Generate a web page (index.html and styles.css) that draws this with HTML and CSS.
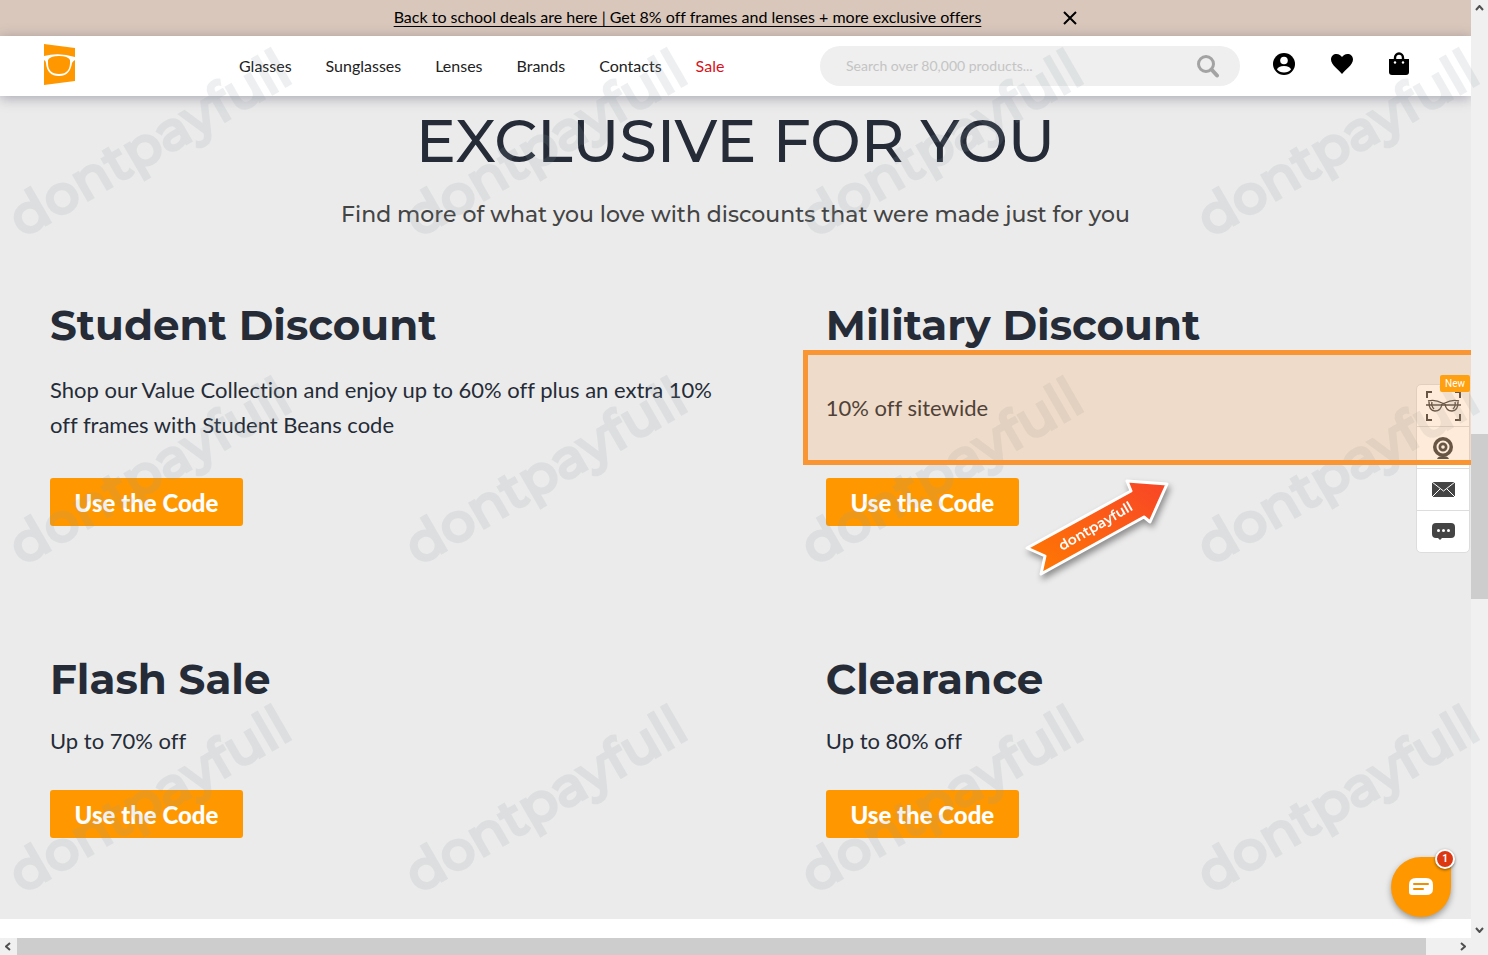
FILE: index.html
```
<!doctype html>
<html lang="en">
  <head>
    <meta charset="utf-8">
    <meta name="viewport" content="width=device-width, initial-scale=1">
    <title>Exclusive For You</title>
    <link rel="stylesheet" href="styles.css">
  </head>
  <body>
    <div class="page">
      <div class="promo">
        <a class="promo-link" href="#">Back to school deals are here | Get 8% off frames and lenses + more exclusive offers</a>
        <button class="promo-close" type="button" aria-label="Close">
          <svg width="14" height="14" viewBox="0 0 14 14"><path d="M1 1l12 12M13 1L1 13" stroke="#000" stroke-width="2"/></svg>
        </button>
      </div>

      <header class="header">
        <a class="logo" href="#" aria-label="Home">
          <svg width="31" height="41" viewBox="0 0 31 41">
            <path d="M0 0l31 4v33L0 41z" fill="#ff9800"/>
            <path d="M0 12Q15 8 31 13V16Q29 17 28 19Q26 32 15 32Q3 32 2 19Q2 17 0 16z" fill="#fff"/>
            <path d="M4 16Q6 12 15 12Q24 12 26 16Q27 30 15 30Q4 30 4 19z" fill="#ff9800"/>
          </svg>
        </a>
        <nav class="nav">
          <a href="#">Glasses</a>
          <a href="#">Sunglasses</a>
          <a href="#">Lenses</a>
          <a href="#">Brands</a>
          <a href="#">Contacts</a>
          <a class="nav-sale" href="#">Sale</a>
        </nav>
        <form class="search">
          <input class="search-input" type="search" aria-label="Search" placeholder="Search over 80,000 products...">
          <button class="search-button" type="submit" aria-label="Search">
            <svg width="24" height="24" viewBox="0 0 24 24" fill="none" stroke="#a3a3a3"><circle cx="10" cy="10" r="7.5" stroke-width="3"/><path d="M15.5 15.5l5.5 6" stroke-width="4" stroke-linecap="round"/></svg>
          </button>
        </form>
        <div class="actions">
          <a href="#" aria-label="Account">
            <svg width="22" height="22" viewBox="0 0 22 22"><circle cx="11" cy="11" r="11"/><circle cx="11" cy="7.5" r="3.8" fill="#fff"/><path d="M4 16.5Q5 13 11 13t7 3.500Q15.500 19.500 11 19.500T4 16.500z" fill="#fff"/></svg>
          </a>
          <a href="#" aria-label="Favourites">
            <svg width="24" height="22" viewBox="0 0 24 22"><path d="M12 21C9 17 1 12 1 6.500C1 3 3.500 1 6.500 1C9 1 11 2.500 12 4C13 2.500 15 1 17.500 1C20.500 1 23 3 23 6.500C23 12 15 17 12 21z"/></svg>
          </a>
          <a href="#" aria-label="Bag">
            <svg width="20" height="24" viewBox="0 0 20 24"><path d="M6 11V6a4 4.500 0 0 1 8 0v5" fill="none" stroke="#000" stroke-width="2.400"/><path d="M0 7h20v13q0 3-3 3H3q-3 0-3-3z"/><circle cx="6" cy="10.500" r="1.200" fill="#fff"/><circle cx="14" cy="10.500" r="1.200" fill="#fff"/></svg>
          </a>
        </div>
      </header>

      <main class="main">
        <h1 class="title">EXCLUSIVE FOR YOU</h1>
        <p class="subtitle">Find more of what you love with discounts that were made just for you</p>

        <div class="offers">
          <section class="offer">
            <h2>Student Discount</h2>
            <p>Shop our Value Collection and enjoy up to 60% off plus an extra 10% off frames with Student Beans code</p>
            <button class="button" type="button">Use the Code</button>
          </section>
          <section class="offer">
            <h2>Military Discount</h2>
            <p>10% off sitewide</p>
            <button class="button" type="button">Use the Code</button>
            <div class="highlight"></div>
            <svg class="arrow" width="160" height="116" viewBox="0 0 160 116">
              <defs>
                <linearGradient id="arrow-fill" x1="0" y1="1" x2="1" y2="0">
                  <stop offset="0" stop-color="#ff7b00"/>
                  <stop offset="1" stop-color="#f84428"/>
                </linearGradient>
              </defs>
              <path d="M8 76L112 19L108 9L148 12L131 50L125 45L22 102L26 84z" fill="url(#arrow-fill)" stroke="#fff" stroke-width="3" stroke-linejoin="round"/>
              <text class="arrow-text" transform="translate(43 79) rotate(-30)">dontpayfull</text>
            </svg>
          </section>
          <section class="offer offer-short">
            <h2>Flash Sale</h2>
            <p>Up to 70% off</p>
            <button class="button" type="button">Use the Code</button>
          </section>
          <section class="offer offer-short">
            <h2>Clearance</h2>
            <p>Up to 80% off</p>
            <button class="button" type="button">Use the Code</button>
          </section>
        </div>
      </main>

      <aside class="tools">
        <a href="#" aria-label="Virtual try-on">
          <svg width="35" height="30" viewBox="0 0 35 30" fill="none" stroke="#444">
            <path d="M1 7V1h5M29 1h5v6M34 23v6h-5M6 29H1v-6" stroke-width="2"/>
            <path d="M0 14h35" stroke-width="1.500"/>
            <path d="M2 10Q9 8 16 12Q17.500 13 19 12Q26 8 33 10M3 11q0 9 6 9q6 0 7-7M32 11q0 9-6 9q-6 0-7-7M6 11q-1 4 2 7M29 11q1 4-2 7" stroke-width="1.400"/>
          </svg>
        </a>
        <a href="#" aria-label="Webcam">
          <svg width="22" height="22" viewBox="0 0 22 22"><circle cx="11" cy="10" r="10" fill="#444"/><circle cx="11" cy="10" r="5.500" fill="none" stroke="#fff" stroke-width="2"/><circle cx="11" cy="10" r="1.800" fill="#fff"/><path d="M5 22q1-3 6-3t6 3z" fill="#444"/></svg>
        </a>
        <a href="#" aria-label="Email">
          <svg width="23" height="15" viewBox="0 0 23 15"><path d="M0 0h23v15H0z" fill="#444"/><path d="M0 0l11.500 9L23 0M0 15l8-8M23 15l-8-8" fill="none" stroke="#fff" stroke-width="1"/></svg>
        </a>
        <a href="#" aria-label="Chat">
          <svg width="23" height="17" viewBox="0 0 23 17"><path d="M4 0h15q4 0 4 4v7q0 4-4 4H10l-2 2-2-2H4q-4 0-4-4V4q0-4 4-4z" fill="#444"/><g fill="#fff"><circle cx="6.500" cy="7.500" r="1.500"/><circle cx="11.500" cy="7.500" r="1.500"/><circle cx="16.500" cy="7.500" r="1.500"/></g></svg>
        </a>
        <span class="tools-new">New</span>
      </aside>

      <button class="chat" type="button" aria-label="Open chat">
        <svg width="24" height="18" viewBox="0 0 24 18"><path d="M7 0h10q7 0 7 7v4q0 6-7 6H3q-3 0-3-3V7q0-7 7-7z" fill="#fff"/><path d="M5 6h14M5 11h9" stroke="#f09000" stroke-width="2" stroke-linecap="round"/></svg>
        <span class="chat-count">1</span>
      </button>
    </div>

    <div class="scroll-y">
      <svg width="9" height="6" viewBox="0 0 9 6"><path d="M1 5l3.500-4L8 5"/></svg>
      <div class="scroll-y-thumb"></div>
      <svg width="9" height="6" viewBox="0 0 9 6"><path d="M1 1l3.500 4L8 1"/></svg>
    </div>
    <div class="scroll-x">
      <svg width="6" height="9" viewBox="0 0 6 9"><path d="M5 1L1 4.500L5 8"/></svg>
      <div class="scroll-x-thumb"></div>
      <svg width="6" height="9" viewBox="0 0 6 9"><path d="M1 1l4 3.500L1 8"/></svg>
    </div>

    <div class="watermarks" aria-hidden="true">
      <span>dontpayfull</span>
      <span>dontpayfull</span>
      <span>dontpayfull</span>
      <span>dontpayfull</span>
      <span>dontpayfull</span>
      <span>dontpayfull</span>
      <span>dontpayfull</span>
      <span>dontpayfull</span>
      <span>dontpayfull</span>
      <span>dontpayfull</span>
      <span>dontpayfull</span>
      <span>dontpayfull</span>
    </div>
  </body>
</html>
```
FILE: styles.css
```
*, *::before, *::after {
  box-sizing: border-box;
}

body {
  position: relative;
  display: grid;
  grid-template-columns: 1fr 17px;
  grid-template-rows: 1fr 17px;
  height: 100vh;
  margin: 0;
  overflow: hidden;
  background: #f0f0f0;
  font-family: Lato, "Open Sans", sans-serif;
  font-variant-ligatures: none;
  color: #252b37;
}

h1, h2, p {
  margin: 0;
}

a {
  color: inherit;
  text-decoration: none;
}

svg {
  display: block;
}

button {
  border: 0;
  padding: 0;
  background: none;
  font-family: inherit;
  cursor: pointer;
}

.page {
  position: relative;
  overflow: hidden;
  background: #fff;
}

/* Top bar */
.promo {
  display: flex;
  justify-content: center;
  align-items: center;
  gap: 82px;
  height: 36px;
  background: #d9c7bb;
  color: #000;
  font-size: 16px;
}

.promo-link {
  padding-bottom: 4px;
  text-decoration: underline;
  text-underline-offset: 3px;
}

.header {
  position: relative;
  display: flex;
  align-items: center;
  height: 60px;
  padding: 0 62px 0 44px;
  background: #fff;
  box-shadow: 0 2px 12px rgba(60, 60, 90, .4);
}

.logo {
  padding-bottom: 3px;
}

.nav {
  display: flex;
  gap: 34px;
  margin-left: 164px;
  padding-bottom: 2px;
  color: #222;
  font-size: 16px;
}

.nav .nav-sale {
  color: #d8121a;
}

.search {
  display: flex;
  align-items: center;
  width: 420px;
  height: 40px;
  margin-left: auto;
  padding: 0 20px 0 26px;
  border-radius: 20px;
  background: #efefef;
}

.search-input {
  flex: 1;
  min-width: 0;
  padding: 0 0 2px;
  border: 0;
  outline: 0;
  background: none;
  font: 14px Lato, sans-serif;
}

.search-input::placeholder {
  color: #c4c4c4;
}

.actions {
  display: flex;
  align-items: center;
  gap: 35px;
  margin-left: 33px;
  padding-bottom: 4px;
}

/* Offers */
.main {
  padding: 10px 0 81px 50px;
  background: #ebebeb;
}

.title,
.subtitle {
  margin-left: -50px;
  font-family: Montserrat, sans-serif;
  text-align: center;
}

.title {
  font-size: 60px;
  font-weight: 500;
  line-height: 70px;
}

.subtitle {
  margin-top: 21px;
  color: #444;
  font-size: 22px;
  font-weight: 500;
  line-height: 36px;
}

.offers {
  display: grid;
  grid-template-columns: 14fr 13fr;
  gap: 127px 81px;
  margin-top: 66px;
}

.offer {
  position: relative;
  display: flex;
  flex-direction: column;
  align-items: flex-start;
}

.offer h2 {
  font-family: Montserrat, sans-serif;
  font-size: 42px;
  font-weight: 700;
  line-height: 52px;
}

.offer p {
  display: flex;
  flex: 1;
  align-items: center;
  max-width: 680px;
  margin: 21px 0 36px;
  font-size: 22px;
  line-height: 35px;
}

.offer-short p {
  margin: 18px 0 32px;
}

.button {
  width: 193px;
  height: 48px;
  border-radius: 3px;
  background: #ff9800;
  color: #fff;
  font-size: 24px;
  font-weight: 900;
}

.highlight {
  position: absolute;
  z-index: 4;
  top: 51px;
  left: -23px;
  right: 0;
  height: 115px;
  border: 5px solid #f99633;
  border-right: 0;
  background: rgba(250, 155, 65, .2);
}

.arrow {
  position: absolute;
  z-index: 5;
  top: 173px;
  left: 193px;
  filter: drop-shadow(2px 4px 3px rgba(0, 0, 0, .4));
}

.arrow-text {
  fill: #fff;
  font: 600 14px Montserrat, sans-serif;
}

/* Floating widgets */
.tools {
  position: absolute;
  top: 384px;
  right: 1px;
  width: 54px;
  border: 1px solid #ddd;
  border-radius: 5px;
  background: #fff;
}

.tools a {
  display: flex;
  justify-content: center;
  align-items: center;
  height: 42px;
}

.tools a:first-child {
  height: 41px;
}

.tools a + a {
  border-top: 1px solid #ddd;
}

.tools-new {
  position: absolute;
  z-index: 5;
  top: -10px;
  right: -1px;
  padding: 0 5px;
  border-radius: 2px;
  background: #ffa010;
  color: #fff;
  font: 10px/17px Roboto, sans-serif;
}

.chat {
  position: absolute;
  right: 20px;
  bottom: 21px;
  display: flex;
  justify-content: center;
  align-items: center;
  width: 60px;
  height: 60px;
  border-radius: 30px 6px 30px 30px;
  background: #ff9800;
  box-shadow: 0 3px 6px rgba(0, 0, 0, .35);
}

.chat-count {
  position: absolute;
  top: -8px;
  right: -4px;
  width: 20px;
  height: 20px;
  border: 2px solid #fff;
  border-radius: 50%;
  background: #dc3912;
  box-shadow: 0 1px 3px rgba(0, 0, 0, .5);
  color: #fff;
  font: 700 10px/16px Roboto, sans-serif;
}

/* Scrollbars */
.scroll-y,
.scroll-x {
  fill: none;
  stroke: #505050;
  stroke-width: 2;
}

.scroll-y {
  display: grid;
  grid-template-rows: auto 423fr 165fr 328fr auto;
  justify-items: center;
  padding: 5px 0;
}

.scroll-y-thumb {
  grid-row: 3;
  width: 17px;
  background: #cdcdcd;
}

.scroll-y svg:last-child {
  grid-row: 5;
}

.scroll-x {
  display: flex;
  align-items: center;
  gap: 6px;
  padding: 0 5px;
}

.scroll-x-thumb {
  flex: 1;
  height: 17px;
  margin-right: 28px;
  background: #cdcdcd;
}

.watermarks {
  position: absolute;
  z-index: 3;
  inset: 0;
  display: grid;
  grid-template-columns: repeat(4, 396px);
  grid-auto-rows: 328px;
  justify-items: start;
  align-items: start;
  overflow: hidden;
  pointer-events: none;
}

.watermarks span {
  margin: 199px 0 0 23px;
  color: #8c9ba5;
  font: 500 54px/40px Montserrat, sans-serif;
  opacity: .15;
  transform: rotate(-30deg);
  transform-origin: left bottom;
  -webkit-text-stroke: 3px #8c9ba5;
  stroke-linejoin: round;
}
```
